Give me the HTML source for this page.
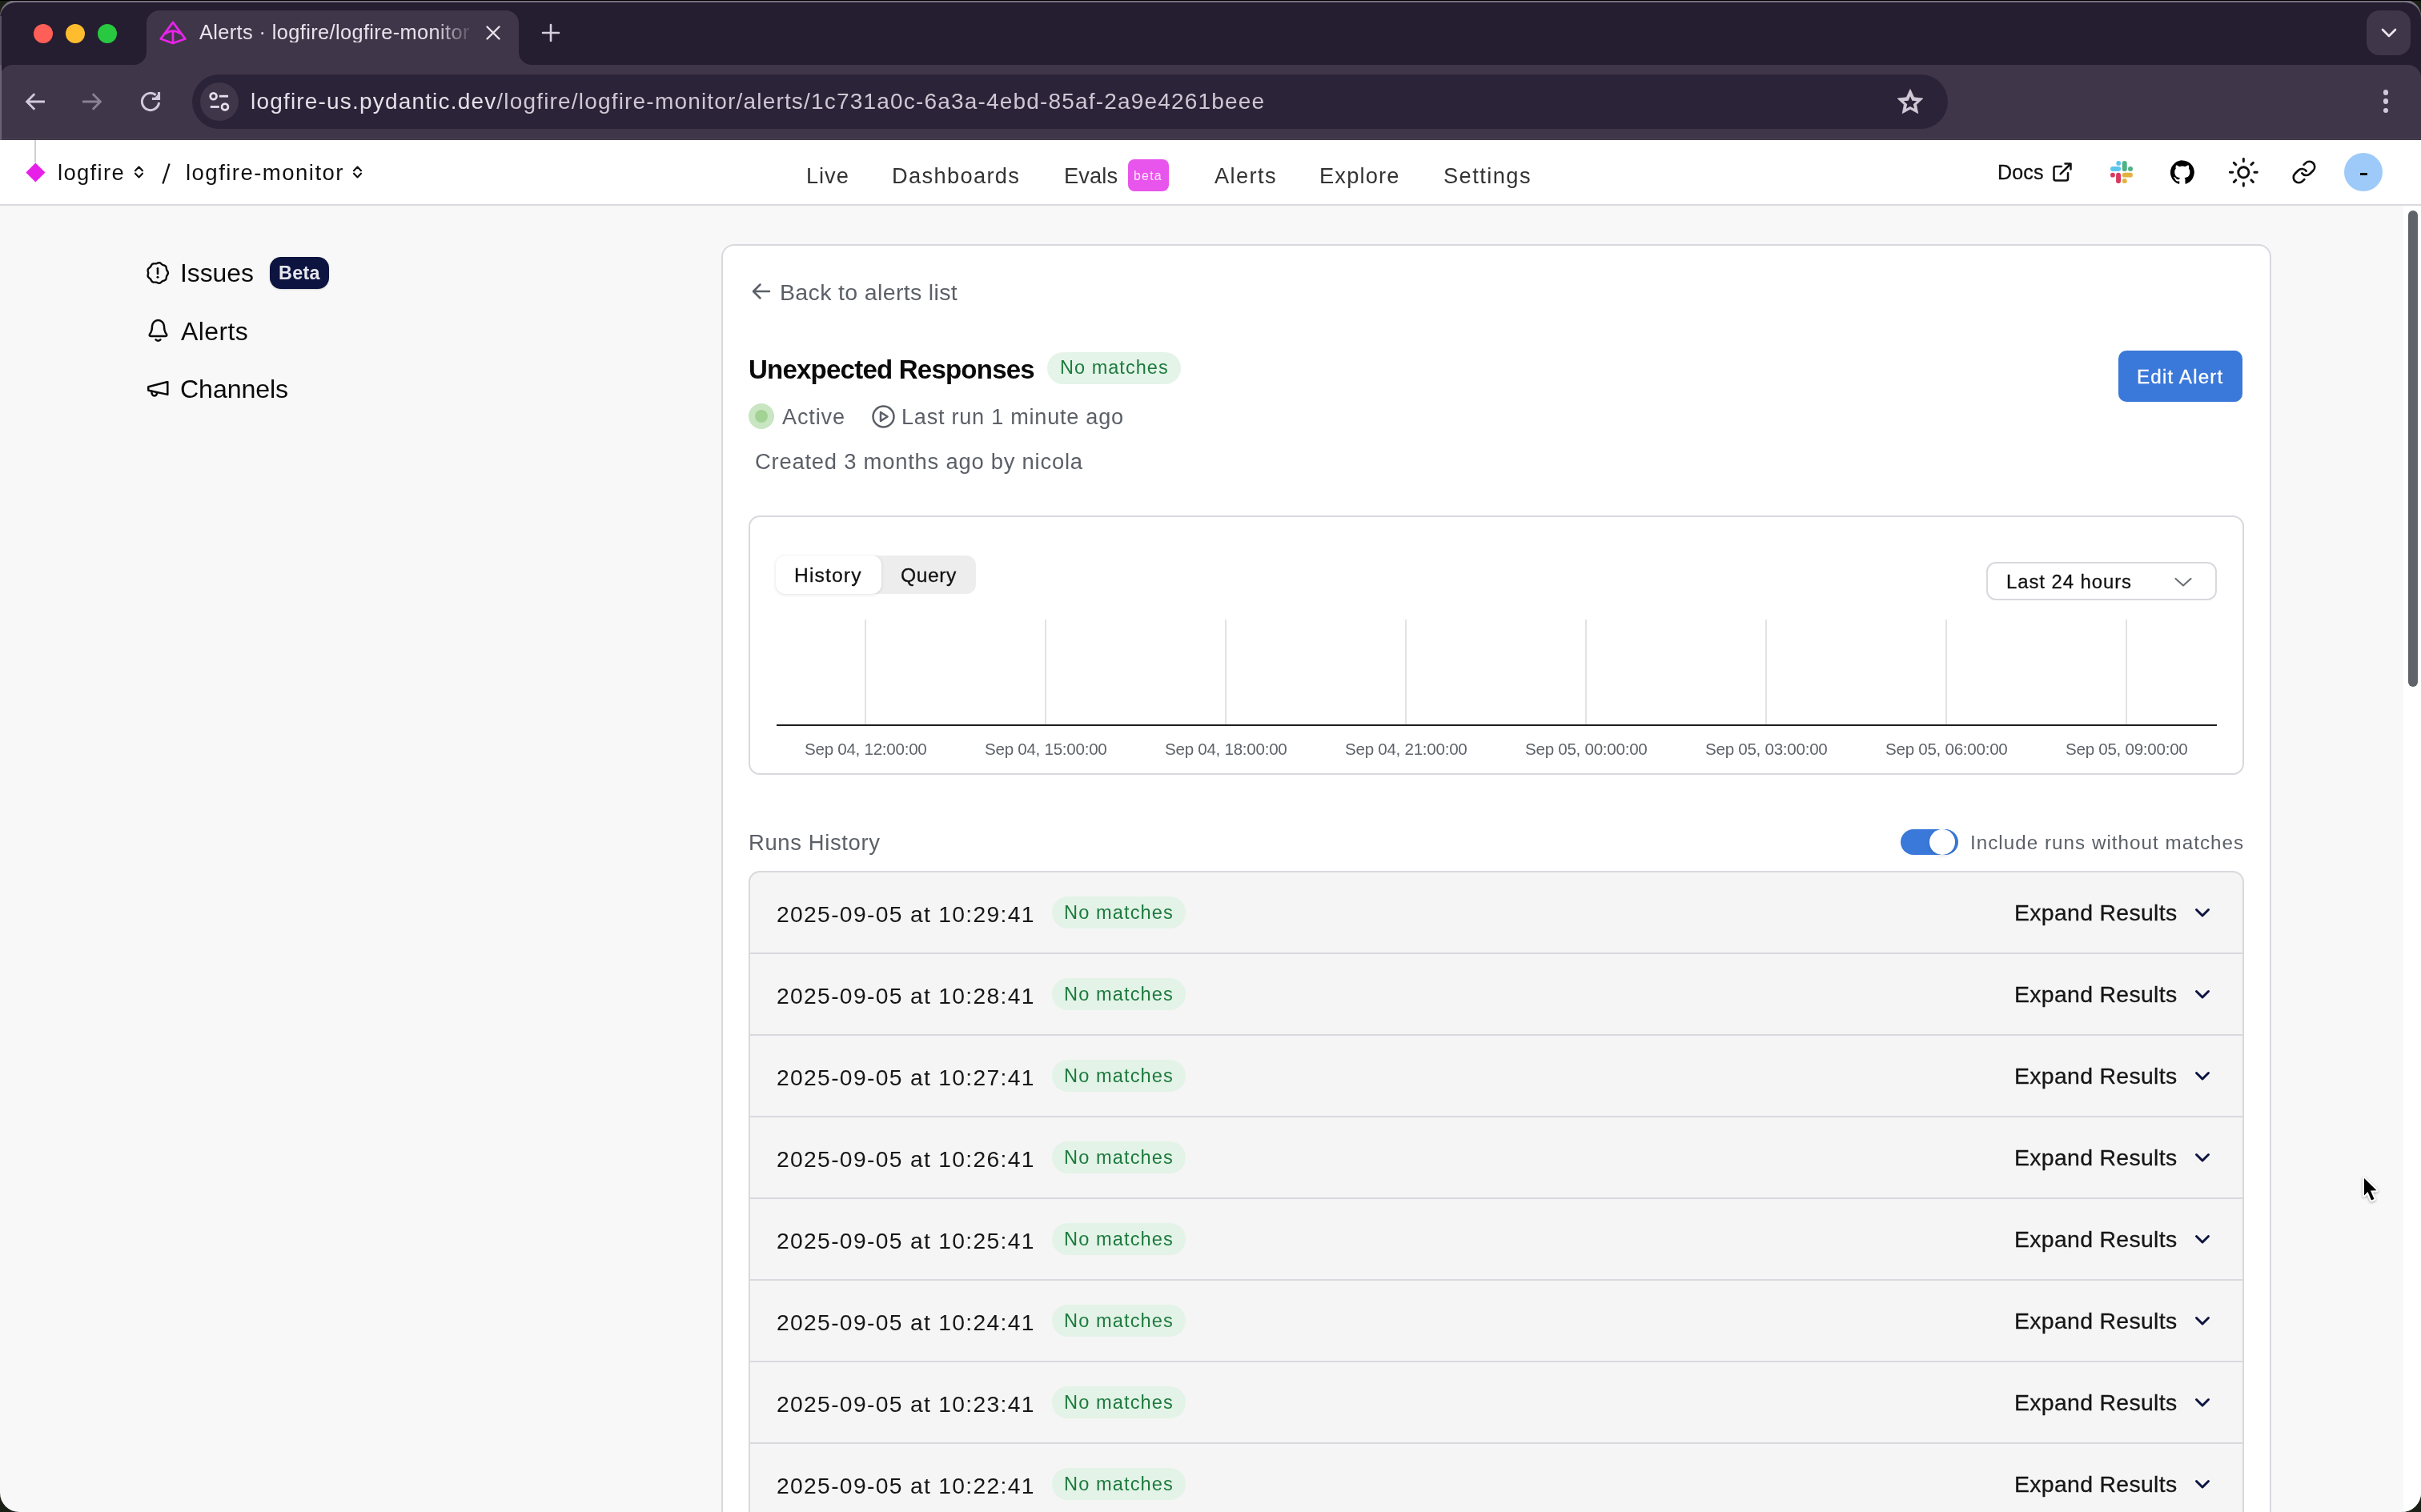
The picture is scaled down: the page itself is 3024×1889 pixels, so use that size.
<!DOCTYPE html>
<html><head><meta charset="utf-8"><title>Alerts · logfire/logfire-monitor</title>
<style>
html,body{margin:0;padding:0;width:3024px;height:1889px;overflow:hidden;background:#1b2016}
.b{position:absolute;display:block}
.t{position:absolute;white-space:nowrap;font-family:"Liberation Sans",sans-serif;will-change:transform}
#win{position:absolute}
</style></head><body>
<div class='b' style='left:0px;top:0px;width:3024px;height:1889px;background:#1b2016'></div>
<div class='b' id='win' style='left:0;top:0;width:3024px;height:1889px;border-radius:20px 20px 24px 24px;overflow:hidden;background:#251D30;box-shadow:inset 0 3px 0 0 #77707F'>
<div class='b' style='left:0px;top:81px;width:3024px;height:94px;background:#403649;border-radius:16px 16px 0 0'></div>
<div class='b' style='left:0px;top:173px;width:3024px;height:1px;background:#4a4551'></div>
<div class='b' style='left:0px;top:20px;width:2px;height:61px;background:#57505F'></div>
<div class='b' style='left:0px;top:81px;width:2px;height:94px;background:#6A6376'></div>
<div class='b' style='left:183px;top:13px;width:465px;height:68px;background:#403649;border-radius:16px 16px 0 0'></div>
<div class='b' style='left:167px;top:65px;width:16px;height:16px;background:#403649'></div>
<div class='b' style='left:151px;top:49px;width:32px;height:32px;background:#251D30;border-radius:0 0 16px 0'></div>
<div class='b' style='left:648px;top:65px;width:16px;height:16px;background:#403649'></div>
<div class='b' style='left:648px;top:49px;width:32px;height:32px;background:#251D30;border-radius:0 0 0 16px'></div>
<div class='b' style='left:42px;top:30px;width:24px;height:24px;background:#FF5F57;border-radius:50%'></div>
<div class='b' style='left:82px;top:30px;width:24px;height:24px;background:#FEBC2E;border-radius:50%'></div>
<div class='b' style='left:122px;top:30px;width:24px;height:24px;background:#28C840;border-radius:50%'></div>
<svg class='b' style='left:198px;top:25px;' width='36' height='32' viewBox='0 0 36 32' fill='none'><path d='M18 2.9 L33.4 23.6 L18 29.1 L2.7 23.6 Z M8.6 17.2 Q18 10.2 27.4 17.2 M18 13.6 L18 29' stroke='#E823E8' stroke-width='2.7' stroke-linejoin='round'/></svg>
<div class='t' style='left:248.5px;top:27.77px;font-size:25.36px;line-height:25.36px;font-weight:400;letter-spacing:0.38px;color:#E9E3EC;width:345px;overflow:hidden;-webkit-mask-image:linear-gradient(90deg,#000 85%,transparent 100%)'>Alerts · logfire/logfire-monitor</div>
<svg class='b' style='left:606px;top:31px;' width='20' height='20' viewBox='0 0 20 20' fill='none'><path d='M2.5 2.5 L17.5 17.5 M17.5 2.5 L2.5 17.5' stroke='#E9E3EC' stroke-width='2.4' stroke-linecap='round'/></svg>
<svg class='b' style='left:676px;top:29px;' width='24' height='24' viewBox='0 0 24 24' fill='none'><path d='M12 2 V22 M2 12 H22' stroke='#D6CEDD' stroke-width='2.6' stroke-linecap='round'/></svg>
<div class='b' style='left:2956px;top:13px;width:55px;height:56px;background:#403649;border-radius:16px'></div>
<svg class='b' style='left:2973px;top:33px;' width='22' height='16' viewBox='0 0 22 16' fill='none'><path d='M3 4 L11 12 L19 4' stroke='#EDE8F0' stroke-width='2.6' stroke-linecap='round' stroke-linejoin='round'/></svg>
<svg class='b' style='left:30px;top:113px;' width='28' height='28' viewBox='0 0 28 28' fill='none'><path d='M26 14 H4.5 M13.2 4.3 L3.6 14 L13.2 23.7' stroke='#D3C9DD' stroke-width='2.8' stroke-linejoin='miter'/></svg>
<svg class='b' style='left:101px;top:113px;' width='28' height='28' viewBox='0 0 28 28' fill='none'><path d='M2 14 H23.5 M14.8 4.3 L24.4 14 L14.8 23.7' stroke='#8A8294' stroke-width='2.8' stroke-linejoin='miter'/></svg>
<svg class='b' style='left:172px;top:111px;' width='32' height='32' viewBox='0 0 32 32' fill='none'><path d='M26.55 17 A10.6 10.6 0 1 1 22.67 7.76' stroke='#D3C9DD' stroke-width='3'/><path d='M24.9 4 L28.1 4 L28.1 14 L17.9 14 L17.9 10.7 L21.5 10.7 L24.9 7.3 Z' fill='#D3C9DD'/></svg>
<div class='b' style='left:240px;top:93px;width:2193px;height:68px;background:#2B2337;border-radius:34px'></div>
<div class='b' style='left:250px;top:103px;width:48px;height:48px;background:#403649;border-radius:50%'></div>
<svg class='b' style='left:258px;top:111px;' width='32' height='32' viewBox='0 0 32 32' fill='none'><circle cx='8.6' cy='9.2' r='3.9' stroke='#E6DEEA' stroke-width='2.8'/><path d='M15.8 9.2 H27' stroke='#E6DEEA' stroke-width='2.8'/><circle cx='23' cy='22.5' r='3.9' stroke='#E6DEEA' stroke-width='2.8'/><path d='M4.8 22.5 H15.8' stroke='#E6DEEA' stroke-width='2.8'/></svg>
<div class='t' style='left:313.0px;top:113.34px;font-size:28.0px;line-height:28.0px;font-weight:400;letter-spacing:1.183px;color:#E6E0EA;'>logfire-us.pydantic.dev<span style='color:#CFC8D4'>/logfire/logfire-monitor/alerts/1c731a0c-6a3a-4ebd-85af-2a9e4261beee</span></div>
<svg class='b' style='left:2360px;top:100px;' width='50' height='50' viewBox='0 0 50 50' fill='none'><path d='M26.00 11.60 L30.70 21.73 L41.79 23.07 L33.61 30.67 L35.76 41.63 L26.00 36.20 L16.24 41.63 L18.39 30.67 L10.21 23.07 L21.30 21.73 Z' fill='#D0C9D5' stroke='#D0C9D5' stroke-width='0.8' stroke-linejoin='round'/><path d='M26.00 20.30 L28.35 25.66 L34.18 26.24 L29.80 30.14 L31.05 35.86 L26.00 32.90 L20.95 35.86 L22.20 30.14 L17.82 26.24 L23.65 25.66 Z' fill='#2B2337'/></svg>
<div class='b' style='left:2976.8px;top:112.39999999999999px;width:6.399999999999636px;height:6.400000000000006px;background:#D3C9DD;border-radius:50%'></div>
<div class='b' style='left:2976.8px;top:123.39999999999999px;width:6.399999999999636px;height:6.3999999999999915px;background:#D3C9DD;border-radius:50%'></div>
<div class='b' style='left:2976.8px;top:134.70000000000002px;width:6.399999999999636px;height:6.399999999999977px;background:#D3C9DD;border-radius:50%'></div>
<div class='b' style='left:0px;top:175px;width:3024px;height:1714px;background:#F8F8F8'></div>
<div class='b' style='left:0px;top:175px;width:3024px;height:80px;background:#FFFFFF'></div>
<div class='b' style='left:0px;top:255px;width:3024px;height:2px;background:#D9DADF'></div>
<div class='b' style='left:3002px;top:257px;width:22px;height:1632px;background:#FFFFFF'></div>
<div class='b' style='left:3007.5px;top:262.5px;width:12.5px;height:595.0px;background:#606369;border-radius:7px'></div>
<div class='b' style='left:43px;top:175px;width:2px;height:28px;background:#CFCFD4'></div>
<div class='b' style='left:35.6px;top:206.8px;width:16.799999999999997px;height:16.799999999999983px;background:#E81FE8;transform:rotate(45deg)'></div>
<div class='t' style='left:72.1px;top:201.6px;font-size:27.45px;line-height:27.45px;font-weight:400;letter-spacing:1.333px;color:#111111;'>logfire</div>
<svg class='b' style='left:167.5px;top:207px;' width='11' height='16' viewBox='0 0 11 16' fill='none'><path d='M1 6.3 L5.5 1.5 L10 6.3 M1 9.7 L5.5 14.5 L10 9.7' stroke='#111' stroke-width='2.1' stroke-linecap='round' stroke-linejoin='round'/></svg>
<svg class='b' style='left:202px;top:203px;' width='11' height='28' viewBox='0 0 11 28' fill='none'><path d='M9.6 1.5 L1.4 26.5' stroke='#111' stroke-width='2.3'/></svg>
<div class='t' style='left:231.6px;top:201.69px;font-size:27.59px;line-height:27.59px;font-weight:400;letter-spacing:1.443px;color:#111111;'>logfire-monitor</div>
<svg class='b' style='left:440.5px;top:207px;' width='11' height='16' viewBox='0 0 11 16' fill='none'><path d='M1 6.3 L5.5 1.5 L10 6.3 M1 9.7 L5.5 14.5 L10 9.7' stroke='#111' stroke-width='2.1' stroke-linecap='round' stroke-linejoin='round'/></svg>
<div class='t' style='left:1006.9px;top:205.77px;font-size:27.25px;line-height:27.25px;font-weight:400;letter-spacing:0.933px;color:#333333;'>Live</div>
<div class='t' style='left:1114.0px;top:205.77px;font-size:27.25px;line-height:27.25px;font-weight:400;letter-spacing:1.333px;color:#333333;'>Dashboards</div>
<div class='t' style='left:1329.0px;top:205.77px;font-size:27.25px;line-height:27.25px;font-weight:400;letter-spacing:0.125px;color:#333333;'>Evals</div>
<div class='t' style='left:1517.0px;top:205.77px;font-size:27.25px;line-height:27.25px;font-weight:400;letter-spacing:1.4px;color:#333333;'>Alerts</div>
<div class='t' style='left:1648.0px;top:205.77px;font-size:27.25px;line-height:27.25px;font-weight:400;letter-spacing:1.167px;color:#333333;'>Explore</div>
<div class='t' style='left:1802.5px;top:205.77px;font-size:27.25px;line-height:27.25px;font-weight:400;letter-spacing:1.443px;color:#333333;'>Settings</div>
<div class='b' style='left:1409px;top:199px;width:51px;height:40px;background:#E855EC;border-radius:8px'></div>
<div class='t' style='left:1416.4px;top:211.6px;font-size:15.86px;line-height:15.86px;font-weight:400;letter-spacing:1.267px;color:#FBEAFB;'>beta</div>
<div class='t' style='left:2495.3px;top:202.68px;font-size:25.0px;line-height:25.0px;font-weight:400;letter-spacing:0.2px;color:#111111;-webkit-text-stroke:0.3px currentColor;'>Docs</div>
<svg class='b' style='left:2562px;top:200.8px;' width='28' height='28' viewBox='0 0 24 24' fill='none'><path d='M15 3h6v6 M10 14 21 3 M18 13v6a2 2 0 0 1-2 2H5a2 2 0 0 1-2-2V8a2 2 0 0 1 2-2h6' stroke='#111' stroke-width='2.15' stroke-linecap='round' stroke-linejoin='round'/></svg>
<svg class='b' style='left:2636px;top:201px;' width='28' height='28' viewBox='0 0 28 28' fill='none'><rect x='7.3' y='0' width='5.8' height='5.9' rx='2.9' fill='#5BC5EE'/><rect x='0' y='7.1' width='13.1' height='6' rx='3' fill='#5BC5EE'/><rect x='14.8' y='0' width='5.9' height='13.1' rx='2.95' fill='#4FB286'/><rect x='22' y='7.1' width='6' height='6' rx='3' fill='#4FB286'/><rect x='0' y='14.8' width='5.9' height='5.8' rx='2.9' fill='#D9385C'/><rect x='7.1' y='14.8' width='5.9' height='13.3' rx='2.95' fill='#D9385C'/><rect x='14.8' y='14.8' width='13.1' height='5.8' rx='2.9' fill='#E2B13E'/><rect x='14.8' y='22' width='5.9' height='6.1' rx='2.95' fill='#E2B13E'/></svg>
<svg class='b' style='left:2711px;top:200px;' width='30' height='30' viewBox='0 0 24 24' fill='none'><path fill='#000' d='M12 .3a12 12 0 0 0-3.8 23.4c.6.1.8-.3.8-.6v-2c-3.3.7-4-1.6-4-1.6-.6-1.4-1.4-1.8-1.4-1.8-1-.7.1-.7.1-.7 1.2.1 1.8 1.2 1.8 1.2 1 1.8 2.8 1.3 3.5 1 0-.8.4-1.3.7-1.6-2.7-.3-5.5-1.3-5.5-5.9 0-1.3.5-2.4 1.2-3.2 0-.3-.5-1.5.2-3.2 0 0 1-.3 3.3 1.2a11.5 11.5 0 0 1 6 0c2.3-1.5 3.3-1.2 3.3-1.2.6 1.7.2 2.9.1 3.2.8.8 1.2 1.9 1.2 3.2 0 4.6-2.8 5.6-5.5 5.9.4.4.8 1.1.8 2.2v3.3c0 .3.2.7.8.6A12 12 0 0 0 12 .3'/></svg>
<svg class='b' style='left:2781.7px;top:194.9px;' width='40.7' height='40.7' viewBox='0 0 24 24' fill='none'><circle cx='12' cy='12' r='3.9' stroke='#111' stroke-width='1.7'/><path d='M12 2v2 M12 20v2 M4.93 4.93l1.41 1.41 M17.66 17.66l1.41 1.41 M2 12h2 M20 12h2 M6.34 17.66l-1.41 1.41 M19.07 4.93l-1.41 1.41' stroke='#111' stroke-width='1.75' stroke-linecap='round'/></svg>
<svg class='b' style='left:2861.5px;top:198.7px;' width='32' height='32' viewBox='0 0 24 24' fill='none'><path d='M10 13a5 5 0 0 0 7.54.54l3-3a5 5 0 0 0-7.07-7.07l-1.72 1.71 M14 11a5 5 0 0 0-7.54-.54l-3 3a5 5 0 0 0 7.07 7.07l1.71-1.71' stroke='#111' stroke-width='2' stroke-linecap='round' stroke-linejoin='round'/></svg>
<div class='b' style='left:2928px;top:191px;width:48px;height:48px;background:#9DCAF9;border-radius:50%'></div>
<div class='b' style='left:2947.5px;top:216px;width:9.5px;height:2.5999999999999943px;background:#111'></div>
<svg class='b' style='left:182px;top:326px;' width='30' height='30' viewBox='0 0 30 30' fill='none'><path d='M27.95 15.00 L27.87 15.67 L27.65 16.33 L27.33 16.95 L26.96 17.54 L26.60 18.11 L26.30 18.67 L26.07 19.25 L25.92 19.86 L25.83 20.52 L25.74 21.20 L25.61 21.89 L25.39 22.55 L25.06 23.15 L24.60 23.65 L24.04 24.04 L23.41 24.34 L22.75 24.57 L22.10 24.77 L21.49 24.99 L20.93 25.26 L20.41 25.61 L19.91 26.03 L19.41 26.50 L18.88 26.95 L18.31 27.35 L17.69 27.64 L17.02 27.78 L16.34 27.77 L15.66 27.63 L15.00 27.40 L14.36 27.13 L13.75 26.89 L13.15 26.71 L12.53 26.62 L11.89 26.60 L11.22 26.63 L10.53 26.66 L9.82 26.62 L9.15 26.49 L8.53 26.22 L7.98 25.81 L7.52 25.29 L7.14 24.70 L6.82 24.09 L6.51 23.49 L6.17 22.95 L5.79 22.46 L5.33 22.03 L4.81 21.62 L4.26 21.20 L3.73 20.74 L3.27 20.22 L2.92 19.64 L2.71 18.99 L2.65 18.31 L2.70 17.61 L2.84 16.93 L2.99 16.26 L3.11 15.62 L3.15 15.00 L3.11 14.38 L2.99 13.74 L2.84 13.07 L2.70 12.39 L2.65 11.69 L2.71 11.01 L2.92 10.36 L3.27 9.78 L3.73 9.26 L4.26 8.80 L4.81 8.38 L5.33 7.97 L5.79 7.54 L6.17 7.05 L6.51 6.51 L6.82 5.91 L7.14 5.30 L7.52 4.71 L7.98 4.19 L8.52 3.78 L9.15 3.51 L9.82 3.38 L10.53 3.34 L11.22 3.37 L11.89 3.40 L12.53 3.38 L13.15 3.29 L13.75 3.11 L14.36 2.87 L15.00 2.60 L15.66 2.37 L16.34 2.23 L17.02 2.22 L17.69 2.36 L18.31 2.65 L18.88 3.05 L19.41 3.50 L19.91 3.97 L20.41 4.39 L20.93 4.74 L21.49 5.01 L22.10 5.23 L22.75 5.43 L23.41 5.66 L24.04 5.96 L24.60 6.35 L25.06 6.85 L25.39 7.45 L25.61 8.11 L25.74 8.80 L25.83 9.48 L25.92 10.14 L26.07 10.75 L26.30 11.33 L26.60 11.89 L26.96 12.46 L27.33 13.05 L27.65 13.67 L27.87 14.33 L27.95 15.00 Z' stroke='#0A0A0A' stroke-width='2.4' stroke-linejoin='round'/><path d='M15 9.3 V16' stroke='#0A0A0A' stroke-width='2.6' stroke-linecap='round'/><circle cx='15' cy='20.3' r='1.5' fill='#0A0A0A'/></svg>
<div class='t' style='left:224.8px;top:325.96px;font-size:31.88px;line-height:31.88px;font-weight:400;letter-spacing:-0.04px;color:#0A0A0A;'>Issues</div>
<div class='b' style='left:337px;top:321px;width:74px;height:40px;background:#0D1440;border-radius:14px;box-shadow:0 1px 2px rgba(0,0,0,0.15)'></div>
<div class='t' style='left:347.6px;top:330.09px;font-size:23.33px;line-height:23.33px;font-weight:700;letter-spacing:0.3px;color:#E8E8EE;'>Beta</div>
<svg class='b' style='left:183.5px;top:398px;' width='27' height='31' viewBox='0 0 27 31' fill='none'><path d='M6 9.6 A7.5 7.5 0 0 1 21 9.6 C21 14 21.5 16.5 23.8 19.2 C24.8 20.4 24.3 22 22.8 22 H4.2 C2.7 22 2.2 20.4 3.2 19.2 C5.5 16.5 6 14 6 9.6 Z' stroke='#0A0A0A' stroke-width='2.5' stroke-linejoin='round'/><path d='M10.6 26.4 Q13.5 29.2 16.4 26.4' stroke='#0A0A0A' stroke-width='2.5' stroke-linecap='round'/></svg>
<div class='t' style='left:226.2px;top:397.83px;font-size:32.03px;line-height:32.03px;font-weight:400;letter-spacing:0.4px;color:#0A0A0A;'>Alerts</div>
<svg class='b' style='left:183.5px;top:476px;' width='27' height='21' viewBox='0 0 27 21' fill='none'><path d='M1.3 7.3 L25.3 1 V16.9 L1.3 11.8 Z' stroke='#0A0A0A' stroke-width='2.5' stroke-linejoin='round'/><path d='M5.4 12.8 Q5.4 18.6 9.1 18.4 Q12.2 18.2 12 14.4' stroke='#0A0A0A' stroke-width='2.5' stroke-linecap='round'/></svg>
<div class='t' style='left:224.8px;top:469.52px;font-size:32.17px;line-height:32.17px;font-weight:400;letter-spacing:-0.1px;color:#0A0A0A;'>Channels</div>
<div class='b' style='left:901px;top:305px;width:1936px;height:1695px;background:#FFFFFF;border:2px solid #D8D9DE;border-radius:16px;box-sizing:border-box'></div>
<svg class='b' style='left:938px;top:352px;' width='26' height='24' viewBox='0 0 26 24' fill='none'><path d='M23 12 H3.5 M11.5 3.5 L3 12 L11.5 20.5' stroke='#5B5F67' stroke-width='2.5' stroke-linecap='round' stroke-linejoin='round'/></svg>
<div class='t' style='left:974.0px;top:350.88px;font-size:28.55px;line-height:28.55px;font-weight:400;letter-spacing:0.333px;color:#5B5F67;'>Back to alerts list</div>
<div class='t' style='left:935.0px;top:444.68px;font-size:33.04px;line-height:33.04px;font-weight:700;letter-spacing:-0.789px;color:#0A0A0A;'>Unexpected Responses</div>
<div class='b' style='left:1308px;top:440px;width:167px;height:40px;background:#E4F4E8;border-radius:20px'></div>
<div class='t' style='left:1323.6px;top:448.16px;font-size:23.48px;line-height:23.48px;font-weight:400;letter-spacing:1.044px;color:#1D7A3E;'>No matches</div>
<div class='b' style='left:935px;top:504px;width:32px;height:32px;background:#C8E6C1;border-radius:50%'></div>
<div class='b' style='left:943px;top:512px;width:16px;height:16px;background:#A3D394;border-radius:50%'></div>
<div class='t' style='left:976.8px;top:507.3px;font-size:27.1px;line-height:27.1px;font-weight:400;letter-spacing:0.84px;color:#5B5F67;'>Active</div>
<svg class='b' style='left:1087.5px;top:504.5px;' width='31' height='31' viewBox='0 0 31 31' fill='none'><circle cx='15.5' cy='15.5' r='13' stroke='#5B5F67' stroke-width='2.5'/><path d='M12 10 L20.5 15.5 L12 21 Z' stroke='#5B5F67' stroke-width='2.5' stroke-linejoin='round'/></svg>
<div class='t' style='left:1126.0px;top:507.3px;font-size:27.1px;line-height:27.1px;font-weight:400;letter-spacing:0.75px;color:#5B5F67;'>Last run 1 minute ago</div>
<div class='t' style='left:943.0px;top:563.16px;font-size:27.39px;line-height:27.39px;font-weight:400;letter-spacing:0.776px;color:#5B5F67;'>Created 3 months ago by nicola</div>
<div class='b' style='left:2646px;top:438px;width:155px;height:64px;background:#3A78D9;border-radius:10px'></div>
<div class='t' style='left:2668.6px;top:458.75px;font-size:24.2px;line-height:24.2px;font-weight:400;letter-spacing:1.156px;color:#FFFFFF;-webkit-text-stroke:0.3px currentColor;'>Edit Alert</div>
<div class='b' style='left:935px;top:644px;width:1868px;height:324px;background:#FFFFFF;border:2px solid #D8D9DE;border-radius:14px;box-sizing:border-box'></div>
<div class='b' style='left:969px;top:694px;width:250px;height:48px;background:#EDEDEE;border-radius:12px'></div>
<div class='b' style='left:969px;top:694px;width:132px;height:48px;background:#FFFFFF;border-radius:12px;box-shadow:0 1px 4px rgba(0,0,0,0.12)'></div>
<div class='t' style='left:991.6px;top:706.88px;font-size:24.64px;line-height:24.64px;font-weight:400;letter-spacing:1.15px;color:#111111;-webkit-text-stroke:0.3px currentColor;'>History</div>
<div class='t' style='left:1124.5px;top:706.88px;font-size:24.64px;line-height:24.64px;font-weight:400;letter-spacing:0.575px;color:#111111;-webkit-text-stroke:0.3px currentColor;'>Query</div>
<div class='b' style='left:2481px;top:702px;width:288px;height:48px;background:#FFFFFF;border:2px solid #D8D8DE;border-radius:12px;box-sizing:border-box'></div>
<div class='t' style='left:2505.8px;top:715.1px;font-size:23.91px;line-height:23.91px;font-weight:400;letter-spacing:0.933px;color:#111111;-webkit-text-stroke:0.3px currentColor;'>Last 24 hours</div>
<svg class='b' style='left:2715px;top:719px;' width='24' height='16' viewBox='0 0 24 16' fill='none'><path d='M2.5 4 L12 12.5 L21.5 4' stroke='#6B6E75' stroke-width='2.2' stroke-linecap='round' stroke-linejoin='round'/></svg>
<div class='b' style='left:1080px;top:774px;width:2px;height:131px;background:#E3E3E7'></div>
<div class='t' style='left:1004.5px;top:926.21px;font-size:20.58px;line-height:20.58px;font-weight:400;letter-spacing:-0.267px;color:#5F6369;'>Sep 04, 12:00:00</div>
<div class='b' style='left:1305px;top:774px;width:2px;height:131px;background:#E3E3E7'></div>
<div class='t' style='left:1229.5px;top:926.21px;font-size:20.58px;line-height:20.58px;font-weight:400;letter-spacing:-0.267px;color:#5F6369;'>Sep 04, 15:00:00</div>
<div class='b' style='left:1530px;top:774px;width:2px;height:131px;background:#E3E3E7'></div>
<div class='t' style='left:1454.5px;top:926.21px;font-size:20.58px;line-height:20.58px;font-weight:400;letter-spacing:-0.267px;color:#5F6369;'>Sep 04, 18:00:00</div>
<div class='b' style='left:1755px;top:774px;width:2px;height:131px;background:#E3E3E7'></div>
<div class='t' style='left:1679.5px;top:926.21px;font-size:20.58px;line-height:20.58px;font-weight:400;letter-spacing:-0.267px;color:#5F6369;'>Sep 04, 21:00:00</div>
<div class='b' style='left:1980px;top:774px;width:2px;height:131px;background:#E3E3E7'></div>
<div class='t' style='left:1904.5px;top:926.21px;font-size:20.58px;line-height:20.58px;font-weight:400;letter-spacing:-0.267px;color:#5F6369;'>Sep 05, 00:00:00</div>
<div class='b' style='left:2205px;top:774px;width:2px;height:131px;background:#E3E3E7'></div>
<div class='t' style='left:2129.5px;top:926.21px;font-size:20.58px;line-height:20.58px;font-weight:400;letter-spacing:-0.267px;color:#5F6369;'>Sep 05, 03:00:00</div>
<div class='b' style='left:2430px;top:774px;width:2px;height:131px;background:#E3E3E7'></div>
<div class='t' style='left:2354.5px;top:926.21px;font-size:20.58px;line-height:20.58px;font-weight:400;letter-spacing:-0.267px;color:#5F6369;'>Sep 05, 06:00:00</div>
<div class='b' style='left:2655px;top:774px;width:2px;height:131px;background:#E3E3E7'></div>
<div class='t' style='left:2579.5px;top:926.21px;font-size:20.58px;line-height:20.58px;font-weight:400;letter-spacing:-0.267px;color:#5F6369;'>Sep 05, 09:00:00</div>
<div class='b' style='left:970px;top:905px;width:1799px;height:2px;background:#1E1E1E'></div>
<div class='t' style='left:935.3px;top:1038.86px;font-size:27.39px;line-height:27.39px;font-weight:400;letter-spacing:0.655px;color:#5B5F67;'>Runs History</div>
<div class='b' style='left:2374px;top:1036px;width:72px;height:32px;background:#3A78D9;border-radius:16px'></div>
<div class='b' style='left:2409.6px;top:1036px;width:32.40000000000009px;height:32px;background:#FFFFFF;border-radius:50%;box-shadow:0 2px 4px rgba(0,0,0,0.10)'></div>
<div class='t' style='left:2460.9px;top:1041.05px;font-size:24.2px;line-height:24.2px;font-weight:400;letter-spacing:1.033px;color:#5B5F67;'>Include runs without matches</div>
<div class='b' style='left:935px;top:1088px;width:1868px;height:1012px;background:#F5F5F5;border:2px solid #D8D9DE;border-radius:14px;box-sizing:border-box'></div>
<div class='t' style='left:969.8px;top:1128.12px;font-size:28.26px;line-height:28.26px;font-weight:400;letter-spacing:1.324px;color:#161616;'>2025-09-05 at 10:29:41</div>
<div class='b' style='left:1314px;top:1120px;width:167px;height:40px;background:#E3F3E7;border-radius:20px'></div>
<div class='t' style='left:1328.9px;top:1128.54px;font-size:23.62px;line-height:23.62px;font-weight:400;letter-spacing:1.1px;color:#1D7A3E;'>No matches</div>
<div class='t' style='left:2515.8px;top:1125.69px;font-size:28.41px;line-height:28.41px;font-weight:400;letter-spacing:0.323px;color:#161616;-webkit-text-stroke:0.3px currentColor;'>Expand Results</div>
<svg class='b' style='left:2741px;top:1134px;' width='20' height='13' viewBox='0 0 20 13' fill='none'><path d='M2.5 2.5 L10 10 L17.5 2.5' stroke='#0D1440' stroke-width='3' stroke-linecap='round' stroke-linejoin='round'/></svg>
<div class='b' style='left:937px;top:1190px;width:1864px;height:2px;background:#D8D9DE'></div>
<div class='t' style='left:969.8px;top:1230.12px;font-size:28.26px;line-height:28.26px;font-weight:400;letter-spacing:1.324px;color:#161616;'>2025-09-05 at 10:28:41</div>
<div class='b' style='left:1314px;top:1222px;width:167px;height:40px;background:#E3F3E7;border-radius:20px'></div>
<div class='t' style='left:1328.9px;top:1230.54px;font-size:23.62px;line-height:23.62px;font-weight:400;letter-spacing:1.1px;color:#1D7A3E;'>No matches</div>
<div class='t' style='left:2515.8px;top:1227.69px;font-size:28.41px;line-height:28.41px;font-weight:400;letter-spacing:0.323px;color:#161616;-webkit-text-stroke:0.3px currentColor;'>Expand Results</div>
<svg class='b' style='left:2741px;top:1236px;' width='20' height='13' viewBox='0 0 20 13' fill='none'><path d='M2.5 2.5 L10 10 L17.5 2.5' stroke='#0D1440' stroke-width='3' stroke-linecap='round' stroke-linejoin='round'/></svg>
<div class='b' style='left:937px;top:1292px;width:1864px;height:2px;background:#D8D9DE'></div>
<div class='t' style='left:969.8px;top:1332.12px;font-size:28.26px;line-height:28.26px;font-weight:400;letter-spacing:1.324px;color:#161616;'>2025-09-05 at 10:27:41</div>
<div class='b' style='left:1314px;top:1324px;width:167px;height:40px;background:#E3F3E7;border-radius:20px'></div>
<div class='t' style='left:1328.9px;top:1332.54px;font-size:23.62px;line-height:23.62px;font-weight:400;letter-spacing:1.1px;color:#1D7A3E;'>No matches</div>
<div class='t' style='left:2515.8px;top:1329.69px;font-size:28.41px;line-height:28.41px;font-weight:400;letter-spacing:0.323px;color:#161616;-webkit-text-stroke:0.3px currentColor;'>Expand Results</div>
<svg class='b' style='left:2741px;top:1338px;' width='20' height='13' viewBox='0 0 20 13' fill='none'><path d='M2.5 2.5 L10 10 L17.5 2.5' stroke='#0D1440' stroke-width='3' stroke-linecap='round' stroke-linejoin='round'/></svg>
<div class='b' style='left:937px;top:1394px;width:1864px;height:2px;background:#D8D9DE'></div>
<div class='t' style='left:969.8px;top:1434.12px;font-size:28.26px;line-height:28.26px;font-weight:400;letter-spacing:1.324px;color:#161616;'>2025-09-05 at 10:26:41</div>
<div class='b' style='left:1314px;top:1426px;width:167px;height:40px;background:#E3F3E7;border-radius:20px'></div>
<div class='t' style='left:1328.9px;top:1434.54px;font-size:23.62px;line-height:23.62px;font-weight:400;letter-spacing:1.1px;color:#1D7A3E;'>No matches</div>
<div class='t' style='left:2515.8px;top:1431.69px;font-size:28.41px;line-height:28.41px;font-weight:400;letter-spacing:0.323px;color:#161616;-webkit-text-stroke:0.3px currentColor;'>Expand Results</div>
<svg class='b' style='left:2741px;top:1440px;' width='20' height='13' viewBox='0 0 20 13' fill='none'><path d='M2.5 2.5 L10 10 L17.5 2.5' stroke='#0D1440' stroke-width='3' stroke-linecap='round' stroke-linejoin='round'/></svg>
<div class='b' style='left:937px;top:1496px;width:1864px;height:2px;background:#D8D9DE'></div>
<div class='t' style='left:969.8px;top:1536.12px;font-size:28.26px;line-height:28.26px;font-weight:400;letter-spacing:1.324px;color:#161616;'>2025-09-05 at 10:25:41</div>
<div class='b' style='left:1314px;top:1528px;width:167px;height:40px;background:#E3F3E7;border-radius:20px'></div>
<div class='t' style='left:1328.9px;top:1536.54px;font-size:23.62px;line-height:23.62px;font-weight:400;letter-spacing:1.1px;color:#1D7A3E;'>No matches</div>
<div class='t' style='left:2515.8px;top:1533.69px;font-size:28.41px;line-height:28.41px;font-weight:400;letter-spacing:0.323px;color:#161616;-webkit-text-stroke:0.3px currentColor;'>Expand Results</div>
<svg class='b' style='left:2741px;top:1542px;' width='20' height='13' viewBox='0 0 20 13' fill='none'><path d='M2.5 2.5 L10 10 L17.5 2.5' stroke='#0D1440' stroke-width='3' stroke-linecap='round' stroke-linejoin='round'/></svg>
<div class='b' style='left:937px;top:1598px;width:1864px;height:2px;background:#D8D9DE'></div>
<div class='t' style='left:969.8px;top:1638.12px;font-size:28.26px;line-height:28.26px;font-weight:400;letter-spacing:1.324px;color:#161616;'>2025-09-05 at 10:24:41</div>
<div class='b' style='left:1314px;top:1630px;width:167px;height:40px;background:#E3F3E7;border-radius:20px'></div>
<div class='t' style='left:1328.9px;top:1638.54px;font-size:23.62px;line-height:23.62px;font-weight:400;letter-spacing:1.1px;color:#1D7A3E;'>No matches</div>
<div class='t' style='left:2515.8px;top:1635.69px;font-size:28.41px;line-height:28.41px;font-weight:400;letter-spacing:0.323px;color:#161616;-webkit-text-stroke:0.3px currentColor;'>Expand Results</div>
<svg class='b' style='left:2741px;top:1644px;' width='20' height='13' viewBox='0 0 20 13' fill='none'><path d='M2.5 2.5 L10 10 L17.5 2.5' stroke='#0D1440' stroke-width='3' stroke-linecap='round' stroke-linejoin='round'/></svg>
<div class='b' style='left:937px;top:1700px;width:1864px;height:2px;background:#D8D9DE'></div>
<div class='t' style='left:969.8px;top:1740.12px;font-size:28.26px;line-height:28.26px;font-weight:400;letter-spacing:1.324px;color:#161616;'>2025-09-05 at 10:23:41</div>
<div class='b' style='left:1314px;top:1732px;width:167px;height:40px;background:#E3F3E7;border-radius:20px'></div>
<div class='t' style='left:1328.9px;top:1740.54px;font-size:23.62px;line-height:23.62px;font-weight:400;letter-spacing:1.1px;color:#1D7A3E;'>No matches</div>
<div class='t' style='left:2515.8px;top:1737.69px;font-size:28.41px;line-height:28.41px;font-weight:400;letter-spacing:0.323px;color:#161616;-webkit-text-stroke:0.3px currentColor;'>Expand Results</div>
<svg class='b' style='left:2741px;top:1746px;' width='20' height='13' viewBox='0 0 20 13' fill='none'><path d='M2.5 2.5 L10 10 L17.5 2.5' stroke='#0D1440' stroke-width='3' stroke-linecap='round' stroke-linejoin='round'/></svg>
<div class='b' style='left:937px;top:1802px;width:1864px;height:2px;background:#D8D9DE'></div>
<div class='t' style='left:969.8px;top:1842.12px;font-size:28.26px;line-height:28.26px;font-weight:400;letter-spacing:1.324px;color:#161616;'>2025-09-05 at 10:22:41</div>
<div class='b' style='left:1314px;top:1834px;width:167px;height:40px;background:#E3F3E7;border-radius:20px'></div>
<div class='t' style='left:1328.9px;top:1842.54px;font-size:23.62px;line-height:23.62px;font-weight:400;letter-spacing:1.1px;color:#1D7A3E;'>No matches</div>
<div class='t' style='left:2515.8px;top:1839.69px;font-size:28.41px;line-height:28.41px;font-weight:400;letter-spacing:0.323px;color:#161616;-webkit-text-stroke:0.3px currentColor;'>Expand Results</div>
<svg class='b' style='left:2741px;top:1848px;' width='20' height='13' viewBox='0 0 20 13' fill='none'><path d='M2.5 2.5 L10 10 L17.5 2.5' stroke='#0D1440' stroke-width='3' stroke-linecap='round' stroke-linejoin='round'/></svg>
<svg class='b' style='left:2940px;top:1460px;filter:drop-shadow(0 1.5px 1.5px rgba(0,0,0,0.35))' width='44' height='50' viewBox='0 0 44 50' fill='none'><path d='M13 12 L13 33.5 L17.5 29 L22 39.5 L25.5 38 L21 27.5 L28.5 27.2 Z' fill='#000' stroke='#fff' stroke-width='4.4' stroke-linejoin='round' paint-order='stroke'/></svg>
</div>
<div class='b' style='left:0px;top:0px;width:3024px;height:1px;background:#000'></div>
<script>(function(){var w=window.innerWidth;if(w&&Math.abs(w-3024)>4){document.documentElement.style.zoom=w/3024;}})();</script>
</body></html>
